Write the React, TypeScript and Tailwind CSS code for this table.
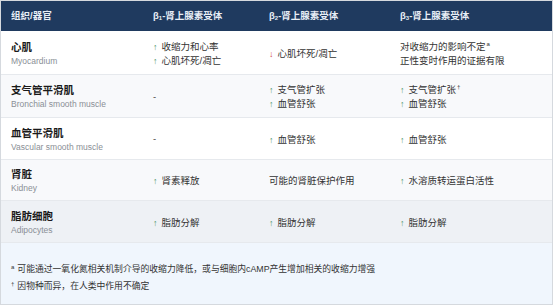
const font = "font-['Liberation_Sans','Noto_Sans_CJK_SC',sans-serif]";

type Cell = { arrow?: "up" | "down"; text: string; sup?: string }[] | "-";

type Row = {
  zh: string;
  en: string;
  h: string;
  bg: string;
  cells: Cell[];
};

const rows: Row[] = [
  {
    zh: "心肌",
    en: "Myocardium",
    h: "h-[44px]",
    bg: "bg-white",
    cells: [
      [
        { arrow: "up", text: "收缩力和心率" },
        { arrow: "up", text: "心肌坏死/凋亡" },
      ],
      [{ arrow: "down", text: "心肌坏死/凋亡" }],
      [{ text: "对收缩力的影响不定", sup: "a" }, { text: "正性变时作用的证据有限" }],
    ],
  },
  {
    zh: "支气管平滑肌",
    en: "Bronchial smooth muscle",
    h: "h-[43px]",
    bg: "bg-[#f8f9fb]",
    cells: [
      "-",
      [
        { arrow: "up", text: "支气管扩张" },
        { arrow: "up", text: "血管舒张" },
      ],
      [
        { arrow: "up", text: "支气管扩张", sup: "†" },
        { arrow: "up", text: "血管舒张" },
      ],
    ],
  },
  {
    zh: "血管平滑肌",
    en: "Vascular smooth muscle",
    h: "h-[42px]",
    bg: "bg-white",
    cells: ["-", [{ arrow: "up", text: "血管舒张" }], [{ arrow: "up", text: "血管舒张" }]],
  },
  {
    zh: "肾脏",
    en: "Kidney",
    h: "h-[41px]",
    bg: "bg-[#f8f9fb]",
    cells: [
      [{ arrow: "up", text: "肾素释放" }],
      [{ text: "可能的肾脏保护作用" }],
      [{ arrow: "up", text: "水溶质转运蛋白活性" }],
    ],
  },
  {
    zh: "脂肪细胞",
    en: "Adipocytes",
    h: "h-[42px]",
    bg: "bg-[#eef1f5]",
    cells: [
      [{ arrow: "up", text: "脂肪分解" }],
      [{ arrow: "up", text: "脂肪分解" }],
      [{ arrow: "up", text: "脂肪分解" }],
    ],
  },
];

const grid = "grid grid-cols-[142px_116px_131px_1fr]";

function Beta({ n }: { n: string }) {
  return (
    <span>
      β<sub className="relative top-[1px] align-baseline text-[6px]">{n}</sub>-肾上腺素受体
    </span>
  );
}

function CellView({ cell }: { cell: Cell }) {
  if (cell === "-") return <span className="text-[#444]">-</span>;
  return (
    <div className="flex flex-col">
      {cell.map((l, i) => (
        <div key={i} className="flex items-center leading-[14px]">
          {l.arrow === "up" && <span className="mr-[4px] text-[9px] text-[#4f9467]">↑</span>}
          {l.arrow === "down" && <span className="mr-[4px] text-[9px] text-[#d24545]">↓</span>}
          <span>{l.text}</span>
          {l.sup && <sup className="relative -top-[3px] ml-[1px] text-[6px]">{l.sup}</sup>}
        </div>
      ))}
    </div>
  );
}

export default function App() {
  return (
    <div className={`${font} h-[305px] w-[553px] overflow-hidden border border-[#d5d9de] bg-white`}>
      <div className={`${grid} h-[30px] items-center bg-[#1f3a5f] text-[9.5px] font-bold text-[#e8eef6]`}>
        <div className="pl-[10px]">组织/器官</div>
        <div className="pl-[10px]">
          <Beta n="1" />
        </div>
        <div className="pl-[10px]">
          <Beta n="2" />
        </div>
        <div className="pl-[10px]">
          <Beta n="3" />
        </div>
      </div>
      {rows.map((r) => (
        <div key={r.zh} className={`${grid} ${r.h} ${r.bg} items-center border-b border-[#e6e9ed] text-[9.5px] text-[#333]`}>
          <div className="pl-[10px] pt-[3px]">
            <div className="text-[10.5px] font-bold leading-[13px] text-[#1a1a1a]">{r.zh}</div>
            <div className="text-[8.5px] leading-[14px] text-[#8a8f96]">{r.en}</div>
          </div>
          {r.cells.map((c, i) => (
            <div key={i} className="pl-[10px] pt-[2px]">
              <CellView cell={c} />
            </div>
          ))}
        </div>
      ))}
      <div className="flex h-[62px] flex-col gap-[7px] bg-[#f0f6fd] px-[10px] pt-[21px] text-[8.8px] text-[#333]">
        <div className="leading-[10px]">
          <sup className="mr-[3px] text-[6px]">a</sup>
          可能通过一氧化氮相关机制介导的收缩力降低，或与细胞内cAMP产生增加相关的收缩力增强
        </div>
        <div className="leading-[10px]">
          <sup className="mr-[3px] text-[6px]">†</sup>
          因物种而异，在人类中作用不确定
        </div>
      </div>
    </div>
  );
}
